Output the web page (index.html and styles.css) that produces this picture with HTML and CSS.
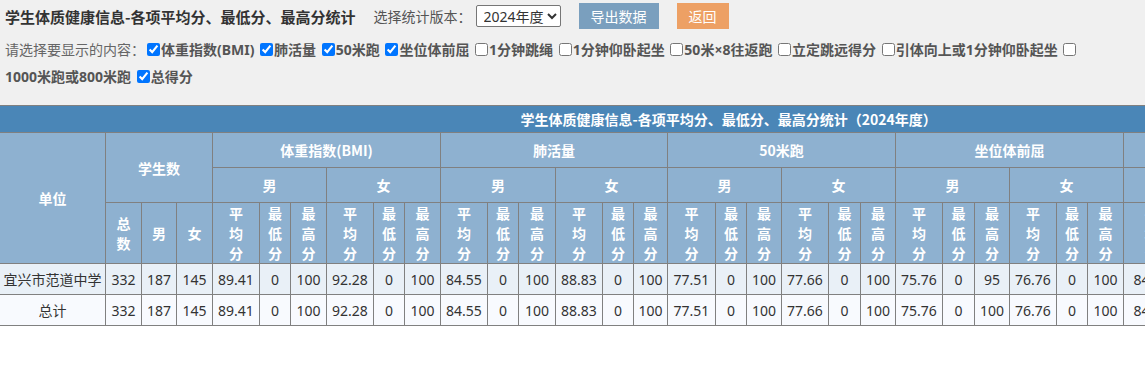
FILE: index.html
```html
<!DOCTYPE html>
<html lang="zh-CN">
<head>
<meta charset="utf-8">
<title>学生体质健康信息-各项平均分、最低分、最高分统计</title>
<link rel="stylesheet" href="styles.css">
</head>
<body>
<div class="top">
  <div class="head-row">
    <h1 class="page-title">学生体质健康信息-各项平均分、最低分、最高分统计</h1>
    <span class="field-label">选择统计版本：</span>
    <select class="version">
      <option>2024年度</option>
      <option>2023年度</option>
    </select>
    <button class="btn btn-export">导出数据</button>
    <button class="btn btn-back">返回</button>
  </div>
  <div class="filters">
    <span class="hint">请选择要显示的内容：</span><input type="checkbox" checked><b>体重指数(BMI)</b>
    <input type="checkbox" checked><b>肺活量</b>
    <input type="checkbox" checked><b>50米跑</b>
    <input type="checkbox" checked><b>坐位体前屈</b>
    <input type="checkbox"><b>1分钟跳绳</b>
    <input type="checkbox"><b>1分钟仰卧起坐</b>
    <input type="checkbox"><b>50米×8往返跑</b>
    <input type="checkbox"><b>立定跳远得分</b>
    <input type="checkbox"><b>引体向上或1分钟仰卧起坐</b>
    <input type="checkbox"><b>1000米跑或800米跑</b>
    <input type="checkbox" checked><b>总得分</b>
  </div>
</div>
<div class="table-wrap">
<table class="stats">
  <colgroup>
    <col style="width:106px"><col style="width:36px"><col style="width:35px"><col style="width:36px">
    <col style="width:47px"><col style="width:31px"><col style="width:36px"><col style="width:47px"><col style="width:31px"><col style="width:36px">
    <col style="width:47px"><col style="width:31px"><col style="width:37px"><col style="width:47px"><col style="width:31px"><col style="width:34px">
    <col style="width:48px"><col style="width:31px"><col style="width:35px"><col style="width:47px"><col style="width:32px"><col style="width:35px">
    <col style="width:47px"><col style="width:32px"><col style="width:35px"><col style="width:47px"><col style="width:31px"><col style="width:36px">
    <col style="width:56px"><col style="width:56px"><col style="width:55px"><col style="width:56px"><col style="width:56px"><col style="width:55px">
  </colgroup>
  <thead>
    <tr class="r-title"><th colspan="34">学生体质健康信息-各项平均分、最低分、最高分统计（2024年度）</th></tr>
    <tr class="r-h1">
      <th rowspan="3">单位</th>
      <th colspan="3" rowspan="2">学生数</th>
      <th colspan="6">体重指数(BMI)</th>
      <th colspan="6">肺活量</th>
      <th colspan="6">50米跑</th>
      <th colspan="6">坐位体前屈</th>
      <th colspan="6">总得分</th>
    </tr>
    <tr class="r-h2">
      <th colspan="3">男</th><th colspan="3">女</th>
      <th colspan="3">男</th><th colspan="3">女</th>
      <th colspan="3">男</th><th colspan="3">女</th>
      <th colspan="3">男</th><th colspan="3">女</th>
      <th colspan="3">男</th><th colspan="3">女</th>
    </tr>
    <tr class="r-h3">
      <th><span class="v">总数</span></th><th>男</th><th>女</th>
      <th><span class="v">平均分</span></th><th><span class="v">最低分</span></th><th><span class="v">最高分</span></th>
      <th><span class="v">平均分</span></th><th><span class="v">最低分</span></th><th><span class="v">最高分</span></th>
      <th><span class="v">平均分</span></th><th><span class="v">最低分</span></th><th><span class="v">最高分</span></th>
      <th><span class="v">平均分</span></th><th><span class="v">最低分</span></th><th><span class="v">最高分</span></th>
      <th><span class="v">平均分</span></th><th><span class="v">最低分</span></th><th><span class="v">最高分</span></th>
      <th><span class="v">平均分</span></th><th><span class="v">最低分</span></th><th><span class="v">最高分</span></th>
      <th><span class="v">平均分</span></th><th><span class="v">最低分</span></th><th><span class="v">最高分</span></th>
      <th><span class="v">平均分</span></th><th><span class="v">最低分</span></th><th><span class="v">最高分</span></th>
      <th><span class="v">平均分</span></th><th><span class="v">最低分</span></th><th><span class="v">最高分</span></th>
      <th><span class="v">平均分</span></th><th><span class="v">最低分</span></th><th><span class="v">最高分</span></th>
    </tr>
  </thead>
  <tbody>
    <tr class="odd">
      <td>宜兴市范道中学</td><td>332</td><td>187</td><td>145</td>
      <td>89.41</td><td>0</td><td>100</td><td>92.28</td><td>0</td><td>100</td>
      <td>84.55</td><td>0</td><td>100</td><td>88.83</td><td>0</td><td>100</td>
      <td>77.51</td><td>0</td><td>100</td><td>77.66</td><td>0</td><td>100</td>
      <td>75.76</td><td>0</td><td>95</td><td>76.76</td><td>0</td><td>100</td>
      <td>84.12</td><td>62</td><td>96</td><td>85.03</td><td>60</td><td>97</td>
    </tr>
    <tr class="even">
      <td>总计</td><td>332</td><td>187</td><td>145</td>
      <td>89.41</td><td>0</td><td>100</td><td>92.28</td><td>0</td><td>100</td>
      <td>84.55</td><td>0</td><td>100</td><td>88.83</td><td>0</td><td>100</td>
      <td>77.51</td><td>0</td><td>100</td><td>77.66</td><td>0</td><td>100</td>
      <td>75.76</td><td>0</td><td>100</td><td>76.76</td><td>0</td><td>100</td>
      <td>84.12</td><td>62</td><td>96</td><td>85.03</td><td>60</td><td>97</td>
    </tr>
  </tbody>
</table>
</div>
</body>
</html>
```
FILE: styles.css
```css
html, body {
  margin: 0;
  padding: 0;
  background: #ffffff;
  font-family: "Noto Sans", "Noto Sans CJK SC", sans-serif;
  font-size: 14px;
  color: #333;
  overflow: hidden;
}

.top {
  background: #f0f0f0;
  height: 102px;
  padding: 3px 5px 0;
}

.head-row {
  display: flex;
  align-items: center;
  height: 26px;
}

.page-title {
  margin: 0 18px 0 0;
  font-size: 15px;
  font-weight: bold;
  color: #333;
  font-family: "Noto Sans CJK SC", sans-serif;
}

.field-label {
  color: #555;
  font-size: 14px;
  margin-right: 4px;
}

.version {
  width: 85px;
  height: 22px;
  font-size: 14px;
  font-family: "Noto Sans", "Noto Sans CJK SC", sans-serif;
  color: #333;
  background: #fff;
  border: 1px solid #767676;
  border-radius: 2px;
  margin-right: 18px;
  padding: 0 0 0 3px;
}

.btn {
  height: 26px;
  border: none;
  padding: 0 12px;
  font-size: 14px;
  font-family: "Noto Sans CJK SC", sans-serif;
  color: #fff;
  margin-right: 18px;
  cursor: pointer;
}

.btn-export {
  background: #7a9fbe;
  width: 80px;
}

.btn-back {
  background: #eda064;
  width: 52px;
}

.filters {
  margin-top: 7px;
  line-height: 27px;
  font-size: 14px;
  color: #555;
}

.filters .hint {
  color: #666;
}

.filters b {
  font-weight: bold;
  color: #555;
  white-space: nowrap;
}

.filters input {
  width: 13px;
  height: 13px;
  margin: 0 1px 0 2px;
  vertical-align: -1px;
}

.table-wrap {
  overflow: hidden;
}

.stats {
  table-layout: fixed;
  border-collapse: collapse;
  width: 1458px;
  margin-left: -1px;
}

.stats th,
.stats td {
  border: 1px solid #808080;
  padding: 0;
  text-align: center;
  vertical-align: middle;
  overflow: hidden;
  white-space: nowrap;
}

.stats th {
  color: #fff;
  font-weight: bold;
  font-family: "Noto Sans CJK SC", sans-serif;
  background: #8eb1d0;
  line-height: 20px;
}

.stats .r-title th {
  background: #4a86b7;
  height: 26px;
}

.stats .r-h1 th,
.stats .r-h2 th {
  height: 34px;
}

.stats .r-h3 th {
  height: 60px;
}

.stats .v {
  display: block;
  width: 1em;
  margin: 0 auto;
  white-space: normal;
  word-break: break-all;
  line-height: 20px;
}

.stats td {
  height: 30px;
  color: #333;
}

.stats .odd td {
  background: #e9f0f7;
}

.stats .even td {
  background: #f8fafe;
}
```
